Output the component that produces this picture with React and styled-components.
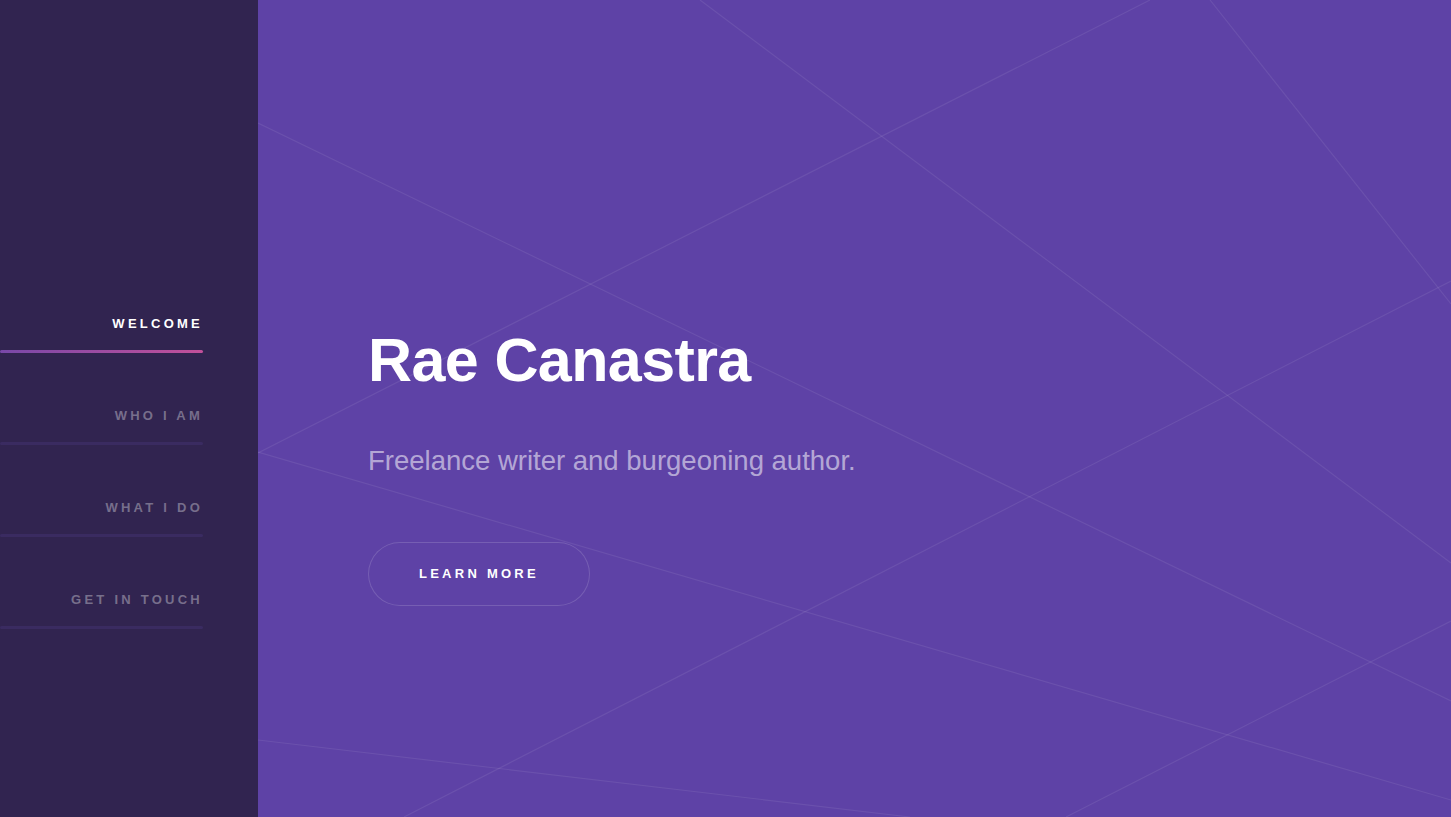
import React from "react";
import styled, { createGlobalStyle } from "styled-components";

const GlobalStyle = createGlobalStyle`
    html, body, #root {
        margin: 0;
        padding: 0;
        height: 100%;
    }
    body {
        background: #5e42a6;
        font-family: "Liberation Sans", Arial, Helvetica, sans-serif;
        color: rgba(255, 255, 255, 0.55);
        overflow: hidden;
    }
`

const Page = styled.div`
    display: flex;
    height: 817px;
`

const Sidebar = styled.aside`
    width: 258px;
    flex-shrink: 0;
    background: #312450;
    display: flex;
    flex-direction: column;
    justify-content: center;
    padding: 106px 55px 0 0;
    box-sizing: border-box;
`

const NavList = styled.ul`
    list-style: none;
    margin: 0;
    padding: 0;
    display: flex;
    flex-direction: column;
    gap: 34px;
`

const NavLink = styled.a`
    position: relative;
    display: block;
    padding: 17.5px 0;
    line-height: 23px;
    font-size: 13px;
    font-weight: bold;
    letter-spacing: 0.25em;
    text-transform: uppercase;
    text-align: right;
    text-decoration: none;
    color: ${p => (p.$active ? "#ffffff" : "rgba(255, 255, 255, 0.35)")};

    &:after {
        content: "";
        position: absolute;
        left: 0;
        right: 0;
        bottom: 0;
        height: 2.6px;
        border-radius: 2px;
        background: ${p => (p.$active
            ? "linear-gradient(to right, #7848a8, #c2509a)"
            : "#3a2b61")};
    }
`

const Main = styled.main`
    position: relative;
    flex: 1;
    background: #5e42a6;
    overflow: hidden;
    display: flex;
    flex-direction: column;
    justify-content: center;
    padding: 110px 0 0 110px;
    box-sizing: border-box;
`

const Lines = styled.svg`
    position: absolute;
    inset: 0;
    width: 100%;
    height: 100%;

    line {
        stroke: rgba(255, 255, 255, 0.08);
        stroke-width: 1.2;
    }
`

const Content = styled.div`
    position: relative;
    display: flex;
    flex-direction: column;
    align-items: flex-start;
`

const Title = styled.h1`
    margin: 0;
    font-size: 61px;
    line-height: 1.3;
    letter-spacing: -0.01em;
    font-weight: bold;
    color: #ffffff;
`

const Tagline = styled.p`
    margin: 36px 0 57px;
    font-size: 27.5px;
    line-height: 1.75;
    color: rgba(255, 255, 255, 0.55);
`

const Button = styled.a`
    display: inline-flex;
    align-items: center;
    justify-content: center;
    height: 64px;
    padding: 0 51px;
    border-radius: 32px;
    box-shadow: inset 0 0 0 1px rgba(255, 255, 255, 0.15);
    color: #ffffff;
    font-size: 13px;
    font-weight: bold;
    letter-spacing: 0.25em;
    text-transform: uppercase;
    text-decoration: none;
    box-sizing: border-box;
`

const navItems = [
    { label: "Welcome", active: true },
    { label: "Who I am" },
    { label: "What I do" },
    { label: "Get in touch" },
];

const bgLines = [
    [442, 0, 1193, 563],
    [892, 0, 0, 453],
    [0, 123, 1193, 701],
    [952, 0, 1193, 304],
    [146, 817, 1193, 281],
    [0, 452, 1193, 800],
    [808, 817, 1193, 621],
    [0, 740, 652, 817],
];

const App = () => (
    <>
        <GlobalStyle/>
        <Page>
            <Sidebar>
                <nav>
                    <NavList>
                        {navItems.map(item => (
                            <li key={item.label}>
                                <NavLink href="#" $active={item.active}>{item.label}</NavLink>
                            </li>
                        ))}
                    </NavList>
                </nav>
            </Sidebar>

            <Main>
                <Lines viewBox="0 0 1193 817" preserveAspectRatio="none">
                    {bgLines.map(([x1, y1, x2, y2], i) => (
                        <line key={i} x1={x1} y1={y1} x2={x2} y2={y2}/>
                    ))}
                </Lines>
                <Content>
                    <Title>Rae Canastra</Title>
                    <Tagline>Freelance writer and burgeoning author.</Tagline>
                    <Button href="#">Learn more</Button>
                </Content>
            </Main>
        </Page>
    </>
);

export default App;
